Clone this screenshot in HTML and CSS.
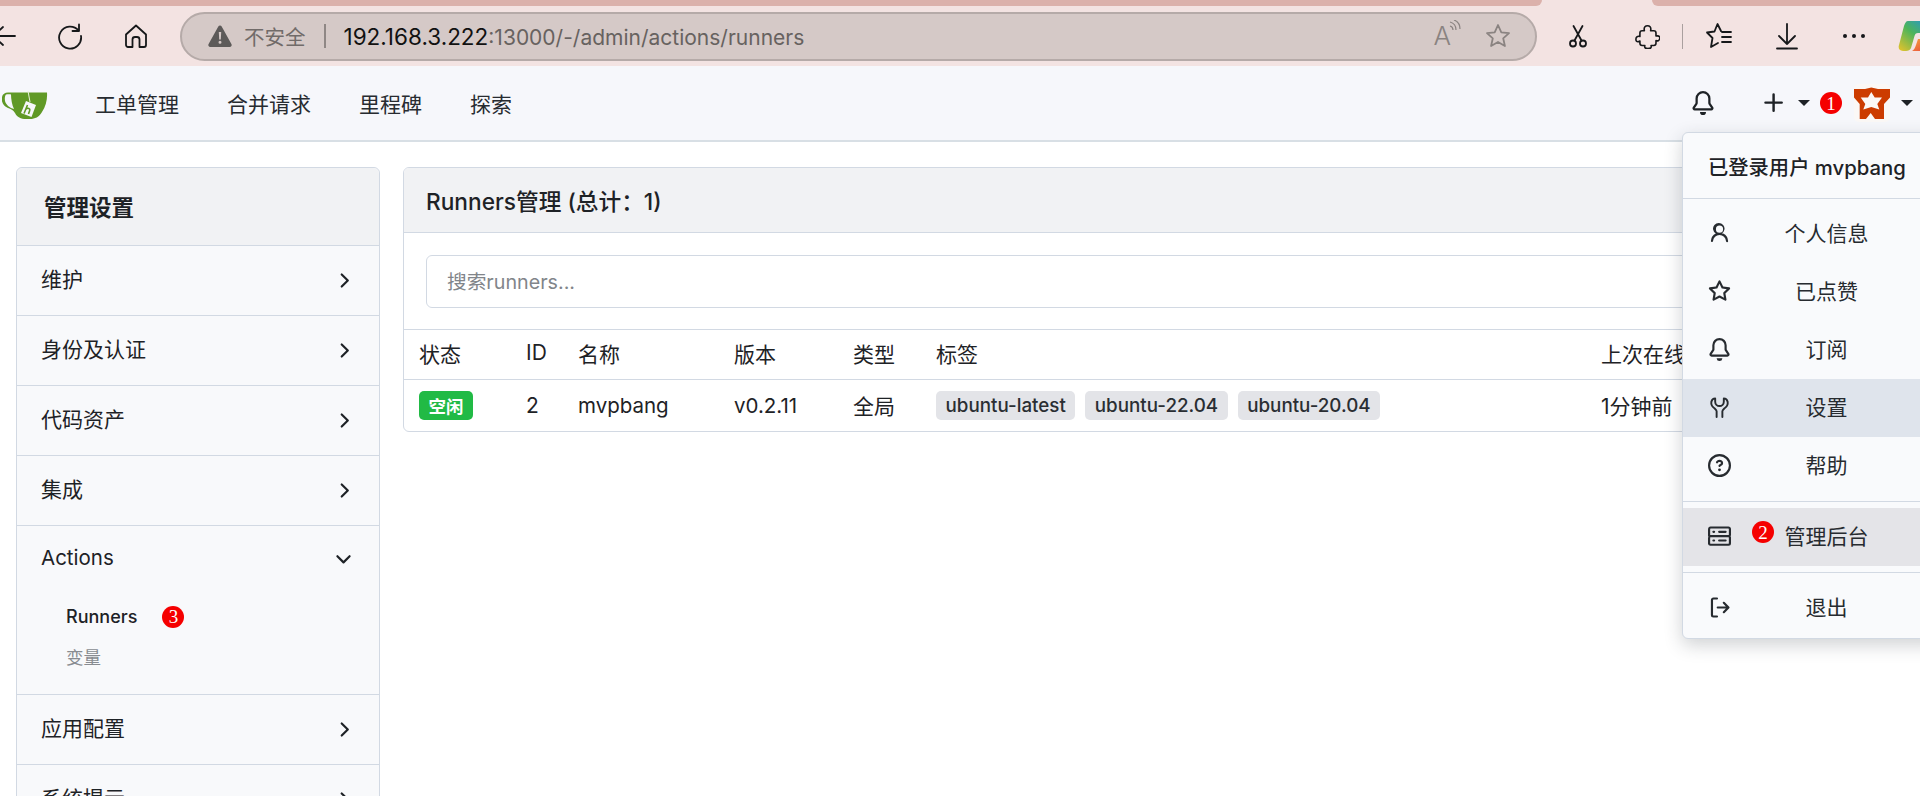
FILE: index.html
```html
<!DOCTYPE html>
<html lang="zh-CN">
<head>
<meta charset="utf-8">
<title>Runners管理</title>
<link rel="stylesheet" href="styles.css">
</head>
<body>
<svg class="defs" aria-hidden="true">
  <symbol id="i-bell" viewBox="0 0 16 16"><path d="M8 16a2 2 0 0 0 1.985-1.75c.017-.137-.097-.25-.235-.25h-3.5c-.138 0-.252.113-.235.25A2 2 0 0 0 8 16ZM3 5a5 5 0 0 1 10 0v2.947c0 .05.015.098.042.139l1.703 2.555A1.519 1.519 0 0 1 13.482 13H2.518a1.516 1.516 0 0 1-1.263-2.36l1.703-2.554A.255.255 0 0 0 3 7.947Zm5-3.5A3.5 3.5 0 0 0 4.5 5v2.947c0 .346-.102.683-.294.97l-1.703 2.556a.017.017 0 0 0-.003.01l.001.006c0 .002.002.004.004.006l.006.004.007.001h10.964l.007-.001.006-.004.004-.006.001-.007a.017.017 0 0 0-.003-.01l-1.703-2.554a1.745 1.745 0 0 1-.294-.97V5A3.5 3.5 0 0 0 8 1.5Z"/></symbol>
  <symbol id="i-plus" viewBox="0 0 16 16"><path d="M7.75 2a.75.75 0 0 1 .75.75V7h4.25a.75.75 0 0 1 0 1.5H8.5v4.25a.75.75 0 0 1-1.5 0V8.5H2.75a.75.75 0 0 1 0-1.5H7V2.75A.75.75 0 0 1 7.75 2Z"/></symbol>
  <symbol id="i-person" viewBox="0 0 16 16"><path d="M10.561 8.073a6.005 6.005 0 0 1 3.432 5.142.75.75 0 1 1-1.498.07 4.5 4.5 0 0 0-8.99 0 .75.75 0 0 1-1.498-.07 6.004 6.004 0 0 1 3.431-5.142 3.999 3.999 0 1 1 4.123 0ZM10.5 5a2.5 2.5 0 1 0-5 0 2.5 2.5 0 0 0 5 0Z"/></symbol>
  <symbol id="i-star" viewBox="0 0 16 16"><path d="M8 .25a.75.75 0 0 1 .673.418l1.882 3.815 4.21.612a.75.75 0 0 1 .416 1.279l-3.046 2.97.719 4.192a.751.751 0 0 1-1.088.791L8 12.347l-3.766 1.98a.75.75 0 0 1-1.088-.79l.72-4.194L.818 6.374a.75.75 0 0 1 .416-1.28l4.21-.611L7.327.668A.75.75 0 0 1 8 .25Zm0 2.445L6.615 5.5a.75.75 0 0 1-.564.41l-3.097.45 2.24 2.184a.75.75 0 0 1 .216.664l-.528 3.084 2.769-1.456a.75.75 0 0 1 .698 0l2.77 1.456-.53-3.084a.75.75 0 0 1 .216-.664l2.24-2.183-3.096-.45a.75.75 0 0 1-.564-.41L8 2.694Z"/></symbol>
  <symbol id="i-question" viewBox="0 0 16 16"><path d="M0 8a8 8 0 1 1 16 0A8 8 0 0 1 0 8Zm8-6.5a6.5 6.5 0 1 0 0 13 6.5 6.5 0 0 0 0-13ZM6.92 6.085h.001a.749.749 0 1 1-1.342-.67c.169-.339.436-.701.849-.977C6.845 4.16 7.369 4 8 4a2.756 2.756 0 0 1 1.637.525c.503.377.863.965.863 1.725 0 .448-.115.83-.329 1.15-.205.307-.47.513-.692.662-.109.072-.22.138-.313.195l-.006.004a6.24 6.24 0 0 0-.26.16.952.952 0 0 0-.276.245.75.75 0 0 1-1.248-.832c.184-.264.42-.489.692-.661.103-.067.207-.132.313-.195l.007-.004c.1-.061.182-.11.258-.161a.969.969 0 0 0 .277-.245C8.96 6.514 9 6.427 9 6.25a.612.612 0 0 0-.262-.525A1.27 1.27 0 0 0 8 5.5c-.369 0-.595.09-.74.187a1.01 1.01 0 0 0-.34.398ZM9 11a1 1 0 1 1-2 0 1 1 0 0 1 2 0Z"/></symbol>
  <symbol id="i-server" viewBox="0 0 16 16"><path d="M1.75 1h12.5c.966 0 1.75.784 1.75 1.75v4c0 .372-.116.717-.314 1 .198.283.314.628.314 1v4a1.75 1.75 0 0 1-1.75 1.75H1.75A1.75 1.75 0 0 1 0 13.25v-4c0-.372.116-.717.314-1a1.739 1.739 0 0 1-.314-1v-4C0 1.784.784 1 1.75 1ZM1.5 2.75v4c0 .138.112.25.25.25h12.5a.25.25 0 0 0 .25-.25v-4a.25.25 0 0 0-.25-.25H1.75a.25.25 0 0 0-.25.25Zm.25 5.75a.25.25 0 0 0-.25.25v4c0 .138.112.25.25.25h12.5a.25.25 0 0 0 .25-.25v-4a.25.25 0 0 0-.25-.25ZM7 4.75A.75.75 0 0 1 7.75 4h4.5a.75.75 0 0 1 0 1.5h-4.5A.75.75 0 0 1 7 4.75ZM7.75 10h4.5a.75.75 0 0 1 0 1.5h-4.5a.75.75 0 0 1 0-1.5ZM3 4.75A.75.75 0 0 1 3.75 4h.5a.75.75 0 0 1 0 1.5h-.5A.75.75 0 0 1 3 4.75ZM3.75 10h.5a.75.75 0 0 1 0 1.5h-.5a.75.75 0 0 1 0-1.5Z"/></symbol>
  <symbol id="i-signout" viewBox="0 0 16 16"><path d="M2 2.75C2 1.784 2.784 1 3.75 1h2.5a.75.75 0 0 1 0 1.5h-2.5a.25.25 0 0 0-.25.25v10.5c0 .138.112.25.25.25h2.5a.75.75 0 0 1 0 1.5h-2.5A1.75 1.75 0 0 1 2 13.25Zm10.44 4.5-1.97-1.97a.749.749 0 0 1 .326-1.275.749.749 0 0 1 .734.215l3.25 3.25a.75.75 0 0 1 0 1.06l-3.25 3.25a.749.749 0 0 1-1.275-.326.749.749 0 0 1 .215-.734l1.97-1.97H6.75a.75.75 0 0 1 0-1.5Z"/></symbol>
  <symbol id="i-right" viewBox="0 0 16 16"><path d="M6.22 3.22a.75.75 0 0 1 1.06 0l4.25 4.25a.75.75 0 0 1 0 1.06l-4.25 4.25a.751.751 0 0 1-1.042-.018.751.751 0 0 1-.018-1.042L9.94 8 6.22 4.28a.75.75 0 0 1 0-1.06Z"/></symbol>
  <symbol id="i-down" viewBox="0 0 16 16"><path d="M12.78 5.22a.749.749 0 0 1 0 1.06l-4.25 4.25a.749.749 0 0 1-1.06 0L3.22 6.28a.749.749 0 1 1 1.06-1.06L8 8.939l3.72-3.719a.749.749 0 0 1 1.06 0Z"/></symbol>
</svg>

<div class="tabstrip"><div class="tabseg"></div><div class="tabseg tabseg-right"></div></div>

<header class="toolbar">
  <svg class="tb-icon tb-back" viewBox="0 0 28 28"><path d="M25 14H3M13 5l-10 9 10 9"/></svg>
  <svg class="tb-icon tb-reload" viewBox="0 0 28 28"><path d="M22.5 8.5A11 11 0 1 0 25 14"/><path d="M23 2.5v6.5h-6.5"/></svg>
  <svg class="tb-icon tb-home" viewBox="0 0 28 28"><path d="M4 12.5 14 3.5l10 9V23a2 2 0 0 1-2 2h-4.500v-7.500a2.500 2.500 0 0 0-2.500-2.500h-2a2.500 2.500 0 0 0-2.500 2.500V25H6a2 2 0 0 1-2-2Z"/></svg>
  <div class="addr">
    <svg class="addr-warn" viewBox="0 0 24 24"><path class="warn-fill" d="M12 1.500a2 2 0 0 1 1.700 1l9.700 17.500a2 2 0 0 1-1.700 3H2.300a2 2 0 0 1-1.700-3L10.300 2.500a2 2 0 0 1 1.700-1Z"/><path class="warn-mark" d="M10.800 8h2.400l-.4 7.500h-1.600ZM12 16.800a1.500 1.500 0 1 1 0 3 1.500 1.500 0 0 1 0-3Z"/></svg>
    <span class="addr-insecure">不安全</span>
    <span class="addr-sep"></span>
    <span class="addr-url"><span class="addr-host">192.168.3.222</span>:13000/-/admin/actions/runners</span>
    <span class="addr-aa">A<svg class="addr-waves" viewBox="0 0 12 14"><path d="M1 2c4 1 6 4 6 8M1 6c2 .5 3 2 3 4M5 0c4 1.500 6 5 6 9"/></svg></span>
    <svg class="addr-star" viewBox="0 0 28 28"><path d="M14 3l3.300 7.300 7.700.8-5.800 5.200 1.700 7.700-6.900-4-6.900 4 1.700-7.700L3 11.100l7.700-.8Z"/></svg>
  </div>
  <svg class="tb-icon tb-cut" viewBox="0 0 28 28"><path d="M9.500 4l8 14.500M18.500 4l-8 14.500"/><circle cx="9" cy="21.500" r="3"/><circle cx="19" cy="21.500" r="3"/></svg>
  <svg class="tb-icon tb-puzzle" viewBox="0 0 28 28"><path d="M10.500 7.500 C9.500 3 12 2 14 2s4.500 1 3.500 5.500H21c1.500 0 2.500 1 2.500 2.500v3.500c4-1 5 1.500 4 3.500-.6 1.500-2 2.500-4 1.500v3c0 1.500-1 2.500-2.500 2.500h-3c.8 3-1 3.500-3.500 3.500s-4.200-.5-3.500-3.500H8c-1.500 0-2.500-1-2.500-2.500v-2.500C2 21 1 19 1 17s1.500-4 4.500-3v-4c0-1.500 1-2.500 2.500-2.500Z"/></svg>
  <span class="tb-sep"></span>
  <svg class="tb-icon tb-fav" viewBox="0 0 28 28"><path d="M16 9 12.500 2 9.500 9.500 2 10.500l5.500 5.500L6 25l7-4M17 10h9M17 15h9M17 20h9"/></svg>
  <svg class="tb-icon tb-dl" viewBox="0 0 28 28"><path d="M14 2v20M6 14l8 8 8-8M4 26.500h20"/></svg>
  <svg class="tb-icon tb-more" viewBox="0 0 28 28"><circle class="dot" cx="5" cy="14" r="2"/><circle class="dot" cx="14" cy="14" r="2"/><circle class="dot" cx="23" cy="14" r="2"/></svg>
  <svg class="tb-copilot" viewBox="0 0 36 30"><defs><linearGradient id="cop-a" x1="1" y1="0" x2="0" y2="1"><stop offset="0" stop-color="#1f8fe8"/><stop offset=".5" stop-color="#4cb45a"/><stop offset="1" stop-color="#eac32a"/></linearGradient><linearGradient id="cop-b" x1="0" y1="0" x2="1" y2="1"><stop offset="0" stop-color="#f5a13a"/><stop offset="1" stop-color="#e8403f"/></linearGradient></defs><path fill="url(#cop-a)" d="M10 0H36V12H20C18 12 17 13 16.500 15L13 27C12.500 29 10 30 8 30H5C1 30 0 27 1 24L6 5C7 2 8 0 10 0Z"/><path fill="url(#cop-b)" d="M14 30C16 29 17 27 18 24L20 18H36V30Z"/></svg>
</header>

<nav class="navbar">
  <svg class="logo" viewBox="0 0 46 28">
    <path class="logo-cup" d="M6 1.500H45C45.500 8 44 15 40 21 37 26 33 28 28 28H24C19 28 15 26 13 22 11 19 9 18 6 17 1 15-1 10 0 6 .5 3 3 1.500 6 1.500Z"/>
    <path class="logo-handle" d="M4 3.500C6 3 8 3 9 3.500 9 8 10 14 12 18 8 17 4 14 3 10 2.500 7 3 4.500 4 3.500Z"/>
    <path class="logo-string" d="M26 0l2 11"/>
    <path class="logo-tag" d="M24 10l10 4-4.500 12-10.500-4Z"/>
    <path class="logo-mark" d="M25.500 14l-3.500 8.500M24 18c2-1.500 4.500-.5 3.700 1.500l-1.200 3.500"/>
  </svg>
  <a class="nav-link">工单管理</a>
  <a class="nav-link">合并请求</a>
  <a class="nav-link">里程碑</a>
  <a class="nav-link">探索</a>
  <div class="nav-right">
    <svg class="oct nav-bell"><use href="#i-bell"/></svg>
    <svg class="oct nav-plus"><use href="#i-plus"/></svg>
    <span class="caret nav-caret-a"></span>
    <span class="mark nav-mark">1</span>
    <svg class="avatar" viewBox="0 0 36 38">
      <rect class="avatar-bg" width="36" height="38" rx="5"/>
      <path class="avatar-red" d="M0 5H11L17.300 3.500 24 5H36V13.500L30 20V35H21L16.700 29 12 35H5.700V20L0 13.500Z"/>
      <path class="avatar-white" d="M17.300 8 20.700 13.500H28L23.300 20 25.300 25.500 17.300 23 9.300 25.500 11.300 20 6.700 13.500H14Z"/>
    </svg>
    <span class="caret nav-caret-b"></span>
  </div>
</nav>

<div class="page">
  <aside class="sidebar">
    <div class="side-head">管理设置</div>
    <div class="side-item"><span class="side-label">维护</span><svg class="oct chev"><use href="#i-right"/></svg></div>
    <div class="side-item"><span class="side-label">身份及认证</span><svg class="oct chev"><use href="#i-right"/></svg></div>
    <div class="side-item"><span class="side-label">代码资产</span><svg class="oct chev"><use href="#i-right"/></svg></div>
    <div class="side-item"><span class="side-label">集成</span><svg class="oct chev"><use href="#i-right"/></svg></div>
    <div class="side-group">
      <div class="side-group-title"><span class="side-actions">Actions</span><svg class="oct chev"><use href="#i-down"/></svg></div>
      <div class="side-sub side-sub-active"><span>Runners</span><span class="mark sub-mark">3</span></div>
      <div class="side-sub">变量</div>
    </div>
    <div class="side-item"><span class="side-label">应用配置</span><svg class="oct chev"><use href="#i-right"/></svg></div>
    <div class="side-item"><span class="side-label">系统提示</span><svg class="oct chev"><use href="#i-right"/></svg></div>
  </aside>

  <main class="panel">
    <div class="panel-head">Runners管理 (总计：1)</div>
    <div class="search-wrap"><div class="search">搜索runners...</div></div>
    <div class="table">
      <div class="row row-head">
        <span class="c-status">状态</span><span class="c-id">ID</span><span class="c-name">名称</span><span class="c-ver">版本</span><span class="c-type">类型</span><span class="c-labels">标签</span><span class="c-last">上次在线时间</span>
      </div>
      <div class="row">
        <span class="c-status"><span class="state">空闲</span></span><span class="c-id">2</span><span class="c-name latin">mvpbang</span><span class="c-ver latin">v0.2.11</span><span class="c-type cjk-cell">全局</span>
        <span class="c-labels labels"><span class="label">ubuntu-latest</span><span class="label">ubuntu-22.04</span><span class="label">ubuntu-20.04</span></span>
        <span class="c-last cjk-cell">1分钟前</span>
      </div>
    </div>
  </main>
</div>

<div class="dropdown">
  <div class="dd-head">已登录用户 mvpbang</div>
  <div class="dd-group">
    <div class="dd-item"><svg class="oct dd-icon"><use href="#i-person"/></svg><span class="dd-text">个人信息</span></div>
    <div class="dd-item"><svg class="oct dd-icon"><use href="#i-star"/></svg><span class="dd-text">已点赞</span></div>
    <div class="dd-item"><svg class="oct dd-icon"><use href="#i-bell"/></svg><span class="dd-text">订阅</span></div>
    <div class="dd-item dd-hover"><svg class="dd-icon dd-tool" viewBox="0 0 24 24"><path d="M9 22v-6c0-1-.5-1.500-2-3C4 11 3 9 3.500 6 4 4 5.500 2.500 7.500 2.500V6a4.500 4.500 0 0 0 9 0V2.500c2 0 3.500 1.500 4 3.500 .5 3-.5 5-3.500 7-1.500 1.500-2 2-2 3v6"/></svg><span class="dd-text">设置</span></div>
    <div class="dd-item"><svg class="oct dd-icon"><use href="#i-question"/></svg><span class="dd-text">帮助</span></div>
  </div>
  <div class="dd-group">
    <div class="dd-item dd-active"><svg class="oct dd-icon"><use href="#i-server"/></svg><span class="dd-text">管理后台</span><span class="mark dd-mark">2</span></div>
  </div>
  <div class="dd-group dd-last">
    <div class="dd-item"><svg class="oct dd-icon"><use href="#i-signout"/></svg><span class="dd-text">退出</span></div>
  </div>
</div>
</body>
</html>
```
FILE: styles.css
```css
* { box-sizing: border-box; }
html, body { margin: 0; height: 796px; overflow: hidden; background: #fff; }
body { position: relative; font-family: "Inter", "Noto Sans CJK SC", sans-serif; font-size: 21px; color: #1e2226; }
.defs { display: none; }

/* browser chrome */
.tabstrip { display: flex; justify-content: space-between; height: 6px; background: #f3e3e2; }
.tabseg { width: 1542px; background: #dbb1ab; border-bottom-right-radius: 8px; }
.tabseg-right { width: 268px; border-bottom-right-radius: 0; border-bottom-left-radius: 8px; }
.toolbar { display: flex; align-items: center; height: 60px; background: #f3e3e2; overflow: hidden; }
.tb-icon { flex: none; width: 28px; height: 28px; fill: none; stroke: #16181a; stroke-width: 1.8; stroke-linecap: round; stroke-linejoin: round; }
.tb-back { margin-left: -10px; }
.tb-reload { margin-left: 38px; }
.tb-home { margin-left: 38px; }
.addr { flex: none; display: flex; align-items: center; width: 1357px; height: 49px; margin-left: 30px; padding-left: 26px; background: #d5c9c7; border: 2px solid #b5aaa8; border-radius: 25px; }
.addr-warn { flex: none; width: 24px; height: 24px; }
.warn-fill { fill: #5d5a59; }
.warn-mark { fill: #d5c9c7; }
.addr-insecure { margin-left: 12px; color: #716b69; font-size: 20.500px; }
.addr-sep { width: 2px; height: 24px; margin: 0 18px 0 18px; background: #8f8785; }
.addr-url { color: #676260; font-size: 21px; }
.addr-host { color: #111; font-size: 22.500px; }
.addr-aa { position: relative; margin-left: auto; margin-right: 6px; color: #8a8381; font-size: 26px; line-height: 1; font-weight: 300; }
.addr-waves { position: absolute; left: 16px; top: -3px; width: 12px; height: 14px; fill: none; stroke: #8a8381; stroke-width: 1.2; }
.addr-star { flex: none; width: 28px; height: 28px; margin: 0 23px 0 27px; fill: none; stroke: #8a8381; stroke-width: 1.8; stroke-linejoin: round; }
.tb-cut { margin-left: 27px; }
.tb-puzzle { width: 25px; height: 25px; margin-left: 43px; }
.tb-sep { flex: none; width: 1px; height: 25px; margin: 0 22px; background: #aaa09f; }
.tb-dl { margin-left: 40px; }
.tb-more { margin-left: 39px; }
.dot { fill: #16181a; stroke: none; }
.tb-copilot { flex: none; width: 36px; height: 30px; margin-left: 30px; }

/* gitea navbar */
.navbar { display: flex; align-items: center; height: 76px; padding-left: 2px; background: #f6f7fb; border-bottom: 2px solid #d8dfe5; }
.logo { flex: none; width: 46px; height: 28px; margin: 4px 47px 0 0; }
.logo-cup { fill: #609926; }
.logo-handle { fill: #f6f7fb; }
.logo-string { fill: none; stroke: #e6efd8; stroke-width: 1; }
.logo-tag { fill: #f6f7fb; }
.logo-mark { fill: none; stroke: #609926; stroke-width: 1.600; }
.nav-link { margin-right: 48px; color: #272b30; white-space: nowrap; }
.nav-right { display: flex; align-items: center; margin-left: auto; padding-right: 7px; }
.oct { fill: currentColor; flex: none; width: 23px; height: 23px; }
.nav-bell { width: 24px; height: 24px; }
.nav-plus { width: 26px; height: 26px; margin-left: 46px; }
.caret { flex: none; width: 0; height: 0; border-left: 6px solid transparent; border-right: 6px solid transparent; border-top: 6px solid #1e2226; }
.nav-caret-a { margin-left: 11px; }
.mark { display: inline-flex; align-items: center; justify-content: center; flex: none; width: 22px; height: 22px; border-radius: 50%; background: #f50000; color: #fff; font-family: "Liberation Serif", serif; font-size: 19px; line-height: 1; }
.nav-mark { margin-left: 10px; }
.avatar { flex: none; width: 36px; height: 38px; margin-left: 12px; }
.avatar-bg { fill: #fbf8f6; }
.avatar-red { fill: #cc3c00; }
.avatar-white { fill: #fbf8f6; }
.nav-caret-b { margin-left: 11px; }

/* page */
.page { display: flex; align-items: flex-start; gap: 23px; height: 654px; overflow: hidden; padding: 25px 16px 0; }
.sidebar { flex: none; width: 364px; background: #f8f9fb; border: 1.500px solid #d2d9e3; border-radius: 6px; }
.side-head { display: flex; align-items: center; height: 78px; padding: 0 0 1px 27px; background: #f1f2f4; border-bottom: 1px solid #d2d9e3; border-radius: 6px 6px 0 0; font-size: 22.500px; font-weight: 600; }
.side-item { display: flex; align-items: center; justify-content: space-between; height: 70px; padding: 0 24px; border-bottom: 1px solid #d2d9e3; }
.side-label { padding-bottom: 5px; }
.side-actions { font-size: 20.500px; padding-bottom: 4px; }
.chev { color: #1e2226; }
.side-group { height: 169px; padding: 0 24px; border-bottom: 1px solid #d2d9e3; }
.side-group-title { display: flex; align-items: center; justify-content: space-between; height: 66px; }
.side-sub { display: flex; align-items: center; height: 41px; padding: 0 0 2px 25px; color: #888c91; font-size: 17.500px; }
.side-sub-active { color: #1e2226; font-size: 18px; font-weight: 500; margin-top: 4px; padding-bottom: 0; }
.sub-mark { margin-left: 25px; }

.panel { flex: 1; min-width: 0; border: 1.500px solid #d2d9e3; border-radius: 6px; overflow: hidden; }
.panel-head { display: flex; align-items: center; height: 65px; padding-left: 22px; background: #f1f2f4; border-bottom: 1px solid #d2d9e3; font-size: 22.700px; font-weight: 500; white-space: nowrap; }
.search-wrap { padding: 22px 22px 21px; }
.search { display: flex; align-items: center; height: 53px; padding: 0 0 2px 20px; border: 1.500px solid #d2d9e3; border-radius: 6px; color: #81858a; font-size: 19.700px; }
.table { border-top: 1.500px solid #d2d9e3; }
.row { display: flex; align-items: center; height: 51px; white-space: nowrap; }
.row-head { height: 50px; padding-bottom: 4px; border-bottom: 1.500px solid #d2d9e3; }
.row > span { flex: none; }
.latin { font-size: 20.500px; }
.cjk-cell { padding-bottom: 2px; }
.c-status { width: 107px; margin-left: 15px; }
.c-id { width: 52px; }
.c-name { width: 156px; }
.c-ver { width: 119px; }
.c-type { width: 83px; }
.c-labels { width: 665px; }
.c-last { width: 200px; }
.state { display: inline-flex; align-items: center; justify-content: center; width: 54px; height: 29px; border-radius: 5px; background: #21ba45; color: #fff; font-size: 17.500px; font-weight: 600; }
.labels { display: flex; gap: 10px; }
.label { display: inline-flex; align-items: center; justify-content: center; height: 29px; padding: 0 9.500px; border-radius: 5px; background: #e3e4e8; font-size: 18.800px; font-weight: 500; color: #2a2e33; }

/* user dropdown */
.dropdown { position: absolute; left: 1682px; top: 132px; width: 260px; height: 507px; background: #f9fafc; border: 1.500px solid #d2d9e3; border-radius: 6px; box-shadow: 0 6px 18px rgba(40, 50, 60, .22); }
.dd-head { display: flex; align-items: center; height: 66px; padding-left: 25px; border-bottom: 1.500px solid #d2d9e3; font-size: 20.300px; font-weight: 500; white-space: nowrap; }
.dd-group { padding: 6px 0; border-bottom: 1.500px solid #d2d9e3; }
.dd-last { border-bottom: 0; }
.dd-item { position: relative; display: flex; align-items: center; height: 58px; padding-left: 25px; color: #272b30; }
.dd-icon { width: 23px; height: 23px; margin-bottom: 2px; }
.dd-tool { flex: none; fill: none; stroke: currentColor; stroke-width: 2; stroke-linecap: round; stroke-linejoin: round; }
.dd-text { width: 191px; padding-bottom: 4px; text-align: center; white-space: nowrap; }
.dd-hover { background: #dfe4ec; }
.dd-active { background: #e4e4e8; }
.dd-mark { position: absolute; left: 69px; top: 13px; }
```
